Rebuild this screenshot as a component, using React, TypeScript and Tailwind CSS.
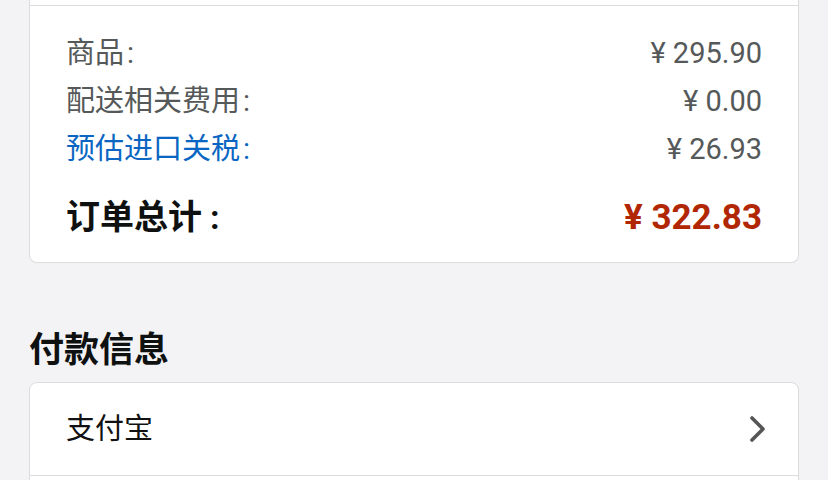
import React from "react";

const font = {
  fontFamily: 'Roboto, "Noto Sans CJK SC", "Noto Sans", sans-serif',
};

function SummaryRow({ label, value, link }: { label: string; value: string; link?: boolean }) {
  return (
    <div className="flex h-[48px] items-center justify-between">
      <span className={link ? "text-[#0a66c2]" : "text-[#565959]"}>
        {label}
        <span className="ml-[3px]">:</span>
      </span>
      <span className="text-[#565959]">{value}</span>
    </div>
  );
}

export default function App() {
  return (
    <div className="min-h-[480px] w-[828px] overflow-hidden bg-[#f3f3f6] px-[29px]" style={font}>
      {/* order summary card, its upper section scrolled out of view */}
      <div className="rounded-b-[8px] border-x border-b border-[#dcdcdf] bg-white">
        <div className="h-[6px] border-b border-[#dcdcdf]" />
        <div className="px-[36px] pt-[23px] pb-[21px] text-[29px] leading-none">
          <SummaryRow label="商品" value="¥ 295.90" />
          <SummaryRow label="配送相关费用" value="¥ 0.00" />
          <SummaryRow label="预估进口关税" value="¥ 26.93" link />
          <div className="mt-[20px] flex h-[48px] items-center justify-between font-bold">
            <span className="text-[34px] text-[#0f1111]">
              订单总计<span className="ml-[8px]">:</span>
            </span>
            <span className="text-[35px] text-[#b12704]">¥ 322.83</span>
          </div>
        </div>
      </div>

      <h2 className="mt-[70px] text-[35px] font-bold leading-none text-[#0f1111]">付款信息</h2>

      <div className="mt-[14px] rounded-[8px] border border-[#dcdcdf] bg-white">
        <div className="flex h-[93px] items-center justify-between border-b border-[#dcdcdf] pl-[36px] pr-[31px]">
          <span className="text-[29px] leading-none text-[#111]">支付宝</span>
          <svg width="18" height="26" viewBox="0 0 18 26" fill="none">
            <path d="M3 2 L14 13 L3 24" stroke="#555" strokeWidth="3.6" strokeLinecap="round" strokeLinejoin="round" />
          </svg>
        </div>
        <div className="h-[60px]" />
      </div>
    </div>
  );
}
